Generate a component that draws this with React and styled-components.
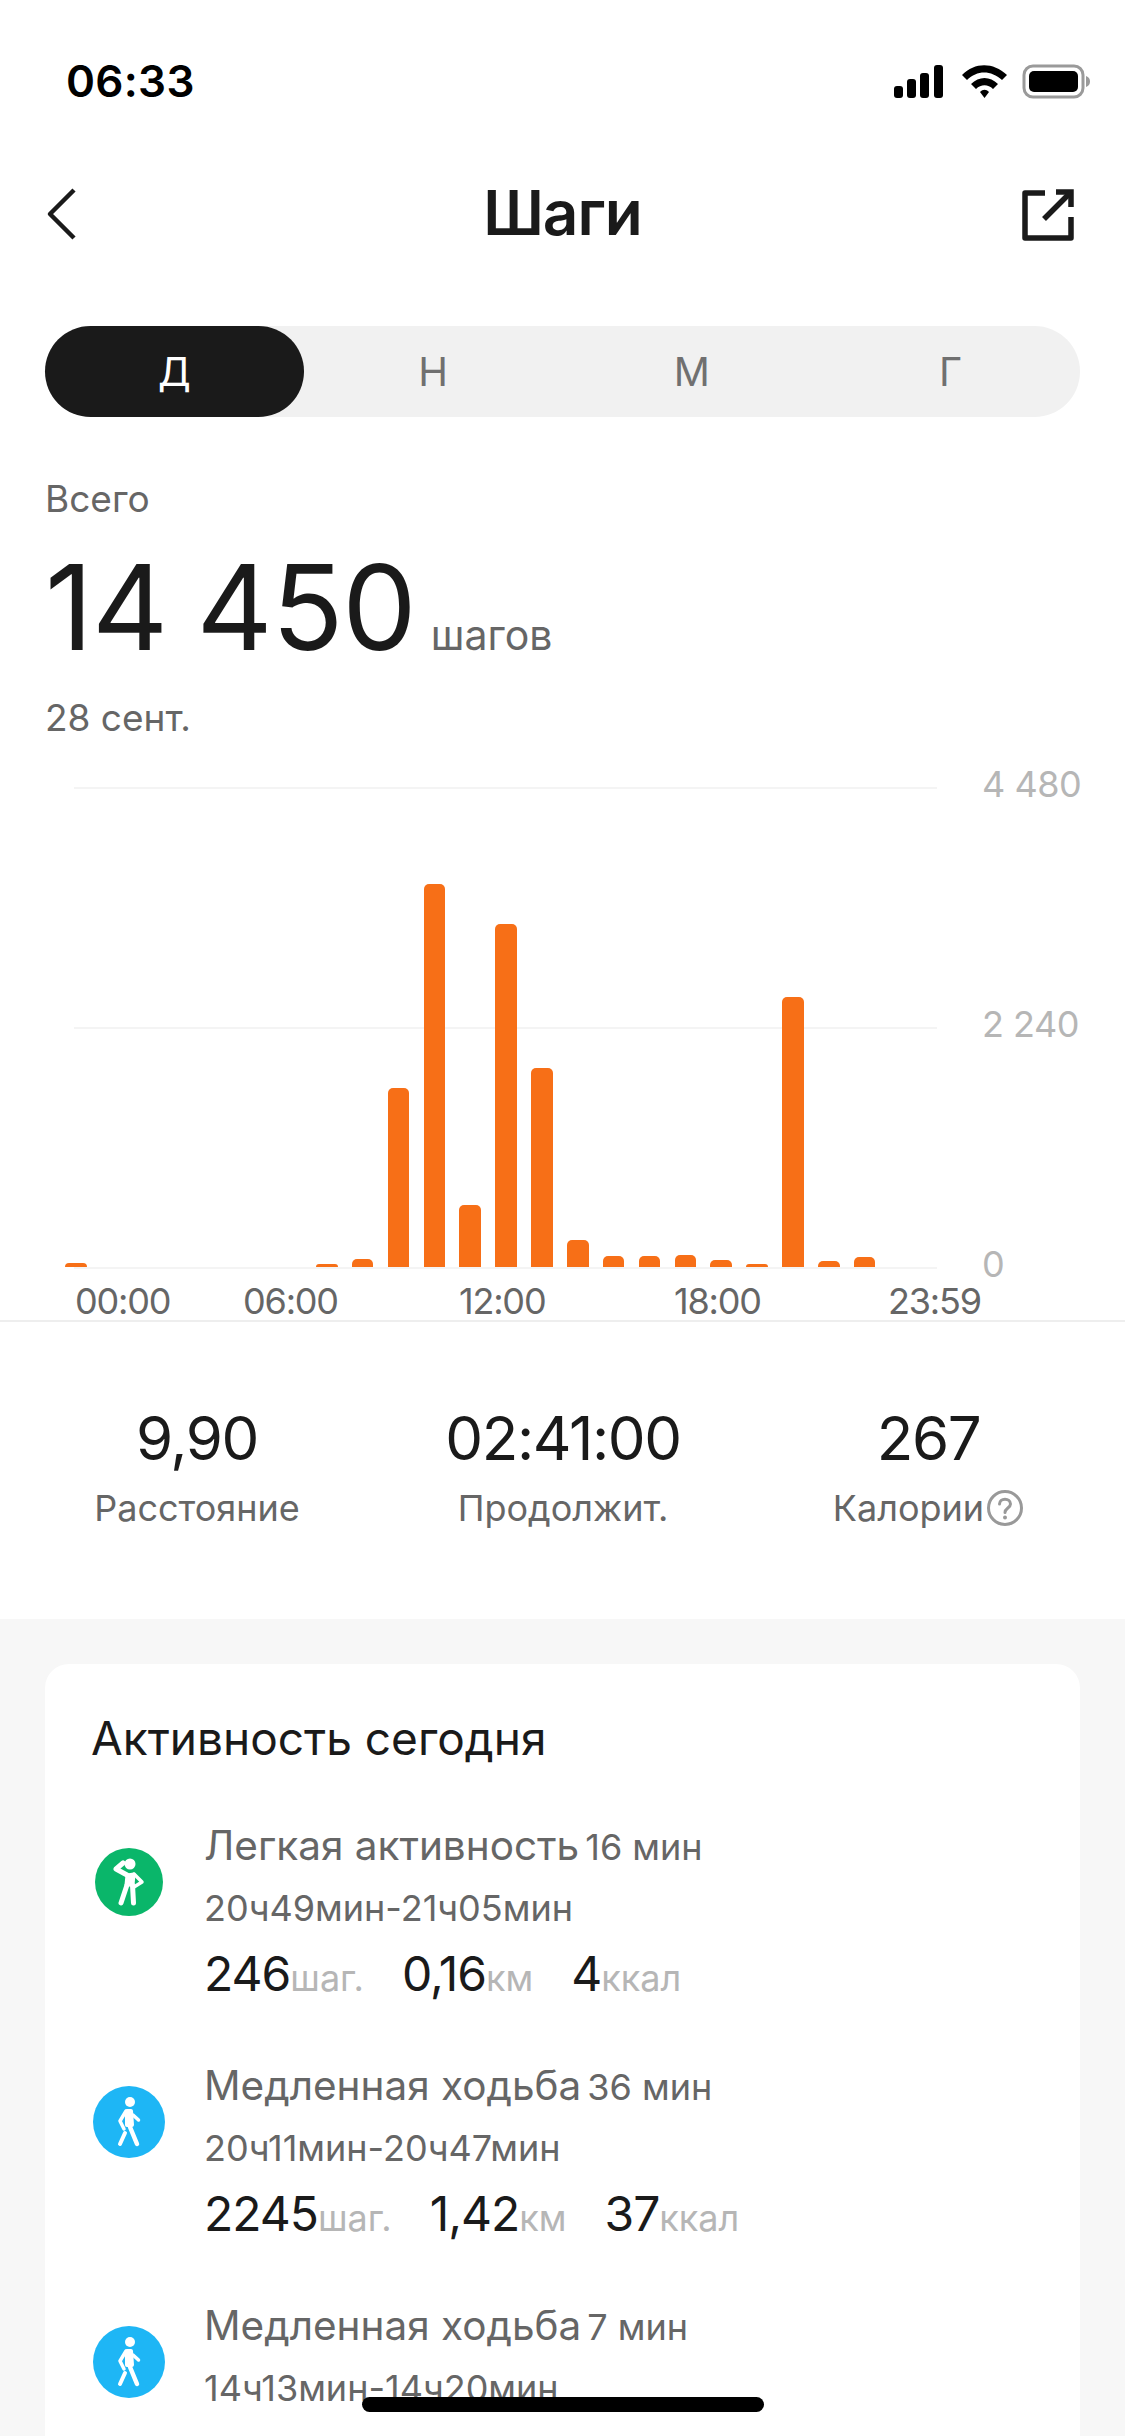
import React from 'react';
import styled, { createGlobalStyle } from 'styled-components';

const Global = createGlobalStyle`
  html, body { margin: 0; padding: 0; background: #fff; }
  #root { width: 1125px; height: 2436px; overflow: hidden; }
  * { box-sizing: border-box; }
`;
const Page = styled.div`
  position: relative; width: 1125px; height: 2436px; overflow: hidden; background: #fff;
  font-family: Inter, "Liberation Sans", sans-serif; color: #1a1a1a;
`;
const StatusBar = styled.div`
  height: 160px; padding: 58px 33px 0 66px; display: flex; justify-content: space-between; align-items: flex-start;
`;
const Clock = styled.div`
  font-size: 44px; line-height: 46px; font-weight: 600; color: #000; letter-spacing: 0.3px;
`;
const StatusIcons = styled.div`
  display: flex; margin-top: 6px;
`;
const NavBar = styled.div`
  height: 106px; padding: 0 44px; display: grid; grid-template-columns: 1fr auto 1fr; align-items: center;
`;
const NavStart = styled.div`
  display: flex; justify-content: flex-start; padding-top: 2px;
`;
const NavEnd = styled.div`
  display: flex; justify-content: flex-end; padding: 4px 6px 0 0;
`;
const Title = styled.div`
  font-size: 62px; font-weight: 600; line-height: 106px; letter-spacing: -1px;
`;
const Segments = styled.div`
  margin: 60px 45px 0; height: 91px; border-radius: 46px; background: #f1f1f1; display: grid; grid-template-columns: repeat(4, 1fr);
`;
const Segment = styled.div`
  display: flex; align-items: center; justify-content: center; font-size: 40px; border-radius: 46px;
  background: ${p => (p.$active ? '#1a1a1a' : 'transparent')};
  color: ${p => (p.$active ? '#fff' : '#707070')};
`;
const Summary = styled.div`
  padding: 60px 45px 0;
`;
const Caption = styled.div`
  font-size: 37px; line-height: 44px; color: #666;
`;
const TotalRow = styled.div`
  display: flex; align-items: baseline; gap: 15px; margin-top: 18px; height: 136px;
`;
const TotalValue = styled.span`
  font-size: 118px; line-height: 136px; letter-spacing: -1px; word-spacing: -3px; color: #1a1a1a;
`;
const TotalUnit = styled.span`
  font-size: 41px; color: #666;
`;
const DateCaption = styled(Caption)`
  margin-top: 21px;
`;
const Chart = styled.div`
  margin-top: 47px; display: grid; grid-template-columns: 872px auto; column-gap: 45px; padding-left: 65px; padding-right: 45px;
`;
const Plot = styled.div`
  display: grid; height: 482px;
`;
const Lines = styled.div`
  grid-area: 1 / 1; display: flex; flex-direction: column; justify-content: space-between; padding-left: 9px;
`;
const Line = styled.div`
  height: 2px; background: #f4f4f4;
`;
const Bars = styled.div`
  grid-area: 1 / 1; display: flex; align-items: flex-end; gap: 14.37px; padding-bottom: 2px;
`;
const Bar = styled.div`
  width: 21.5px; flex: none; background: #f76f17; border-radius: 5px 5px 0 0;
`;
const YAxis = styled.div`
  margin: -25px 0 -17px; display: flex; flex-direction: column; justify-content: space-between;
  font-size: 36px; line-height: 44px; color: #b6b6b6; white-space: nowrap; letter-spacing: -0.5px;
`;
const XAxis = styled.div`
  display: flex; padding-left: 75px; margin-top: 10px; height: 41px; font-size: 36px; line-height: 44px; color: #666; letter-spacing: -1.2px;
`;
const XLabel = styled.span`
  width: ${p => p.$w}px; flex: none; white-space: nowrap;
`;
const Divider = styled.div`
  height: 2px; background: #eee;
`;
const Stats = styled.div`
  height: 297px; display: grid; grid-template-columns: 364px 368px 1fr; padding: 80px 15px 0;
`;
const Stat = styled.div`
  display: flex; flex-direction: column; align-items: center;
`;
const StatValue = styled.div`
  font-size: 60px; line-height: 72px; color: #1a1a1a; letter-spacing: -1.4px;
`;
const StatLabel = styled.div`
  display: flex; align-items: center; gap: 2px; margin-top: 12px; font-size: 36px; line-height: 44px; color: #666;
`;
const Band = styled.div`
  background: #f7f7f7; height: 817px; padding: 45px 45px 0;
`;
const Card = styled.div`
  background: #fff; border-radius: 24px 24px 0 0; height: 772px; padding: 49px 46px 0; overflow: hidden;
`;
const CardTitle = styled.div`
  font-size: 46px; line-height: 50px; color: #1a1a1a;
`;
const Activity = styled.div`
  display: flex; height: 240px; align-items: flex-start;
`;
const ActivityList = styled.div`
  margin-top: 53px;
`;
const Badge = styled.div`
  flex: none; width: ${p => p.$size}px; height: ${p => p.$size}px; border-radius: 50%; background: ${p => p.$bg};
  margin: ${p => p.$top}px ${p => 113 - p.$size - p.$left}px 0 ${p => p.$left}px;
  display: flex; align-items: center; justify-content: center;
`;
const ActivityBody = styled.div`
  flex: 1; min-width: 0;
`;
const ActivityHead = styled.div`
  display: flex; align-items: baseline; gap: 6px; height: 60px; line-height: 60px;
`;
const ActivityName = styled.span`
  font-size: 40.5px; color: #666;
`;
const ActivityDuration = styled.span`
  font-size: 36px; color: #666;
`;
const ActivityTime = styled.div`
  font-size: 36px; line-height: 44px; color: #666; margin-top: 10px;
`;
const Metrics = styled.div`
  display: flex; gap: 38px; margin-top: 15px; align-items: baseline;
`;
const Metric = styled.div`
  display: flex; align-items: baseline;
`;
const MetricValue = styled.span`
  font-size: 48px; line-height: 58px; color: #1a1a1a; letter-spacing: -1px;
`;
const MetricUnit = styled.span`
  font-size: 36px; color: #b6b6b6;
`;
const HomeIndicator = styled.div`
  position: absolute; left: 362px; top: 2397px; width: 402px; height: 15px; border-radius: 8px; background: #000;
`;

const heights = [4,0,0,0,0,0,0,3,8,179,383,62,343,199,27,11,11,12,7,3,270,6,10,0];

const Back = () => (
  <svg width="34" height="54" viewBox="0 0 34 54" fill="none"><path d="M30 3 L6 27 L30 51" stroke="#1a1a1a" strokeWidth="4.5" strokeLinejoin="round" /></svg>
);
const Share = () => (
  <svg width="54" height="54" viewBox="0 0 54 54" fill="none" stroke="#1a1a1a" strokeWidth="5.500">
    <path d="M24 5 H4 V50 H50 V29" strokeLinejoin="round" />
    <path d="M35 4 H50 V19" />
    <path d="M50 4 L23 31" />
  </svg>
);
const StatusIcon = () => (
  <svg width="200" height="36" viewBox="0 0 200 36">
    <rect x="2" y="22" width="9" height="12" rx="3" />
    <rect x="15" y="15" width="9" height="19" rx="3" />
    <rect x="28" y="9" width="9" height="25" rx="3" />
    <rect x="42" y="1" width="9" height="33" rx="3" />
    <path d="M70 11 C83 -2 101 -2 115 11 L110 16 C99 6 85 6 75 16 Z" />
    <path d="M79 20 C87 12 98 12 106 20 L101 25 C96 20 89 20 84 25 Z" />
    <path d="M88 28 C91 25 94 25 97 28 L92.500 34 Z" />
    <rect x="132" y="2" width="59" height="31" rx="9" fill="none" stroke="#9a9a9a" strokeWidth="3" />
    <rect x="137" y="7" width="49" height="21" rx="5" />
    <path d="M194 12 C197 13 198 15 198 17.500 C198 20 197 22 194 23 Z" fill="#9a9a9a" />
  </svg>
);
const Help = () => (
  <svg width="38" height="38" viewBox="0 0 38 38" fill="none">
    <circle cx="19" cy="19" r="16.500" stroke="#999" strokeWidth="3" />
    <path d="M13.500 15 C13.500 8.500 24.500 8.500 24.500 15 C24.500 19 19 19 19 23.500" stroke="#999" strokeWidth="3" strokeLinecap="round" />
    <circle cx="19" cy="28.500" r="2" fill="#999" />
  </svg>
);
const Stretch = () => (
  <svg width="32" height="48" viewBox="0 0 32 48" fill="#fff" stroke="#fff" strokeLinecap="round" strokeLinejoin="round">
    <circle cx="17" cy="6" r="5.500" stroke="none" />
    <path d="M14 17 L3 11 L10 5" fill="none" strokeWidth="5" />
    <path d="M14 17 L21 16 L20 27 L13 27 Z" strokeWidth="3" />
    <path d="M21 16 L29 24 L21 29" fill="none" strokeWidth="3.500" />
    <path d="M14 27 L8 45" fill="none" strokeWidth="5" />
    <path d="M19.500 27 L20.500 45" fill="none" strokeWidth="5" />
  </svg>
);
const Walk = () => (
  <svg width="26" height="50" viewBox="0 0 26 50" fill="#fff" stroke="#fff" strokeLinecap="round" strokeLinejoin="round">
    <circle cx="14" cy="5" r="5" stroke="none" />
    <path d="M11 14 L15 14 L16 28 L11 28 Z" strokeWidth="4" />
    <path d="M10 14 L4 24 L8 32" fill="none" strokeWidth="3.500" />
    <path d="M17 18 L22.500 23" fill="none" strokeWidth="3.500" />
    <path d="M14 30 L21 47" fill="none" strokeWidth="4.500" />
    <path d="M9 36 L4 47" fill="none" strokeWidth="4" />
  </svg>
);

const activities = [
  { name: 'Легкая активность', dur: '16 мин', time: '20ч49мин-21ч05мин', icon: <Stretch />, bg: '#0ab66a', size: 68, top: 32, left: 4, m: ['246', '0,16', '4'] },
  { name: 'Медленная ходьба', dur: '36 мин', time: '20ч11мин-20ч47мин', icon: <Walk />, bg: '#1eb6f5', size: 72, top: 30, left: 2, m: ['2245', '1,42', '37'] },
  { name: 'Медленная ходьба', dur: '7 мин', time: '14ч13мин-14ч20мин', icon: <Walk />, bg: '#1eb6f5', size: 72, top: 30, left: 2, m: ['134', '0,07', '2'] },
];
const units = ['шаг.', 'км', 'ккал'];
const xLabels = [['00:00', 168], ['06:00', 216], ['12:00', 215], ['18:00', 214], ['23:59', 100]];

export default function App() {
  return (
    <Page>
      <Global />
      <StatusBar>
        <Clock>06:33</Clock>
        <StatusIcons><StatusIcon /></StatusIcons>
      </StatusBar>
      <NavBar>
        <NavStart><Back /></NavStart>
        <Title>Шаги</Title>
        <NavEnd><Share /></NavEnd>
      </NavBar>
      <Segments>
        <Segment $active>Д</Segment>
        <Segment>Н</Segment>
        <Segment>М</Segment>
        <Segment>Г</Segment>
      </Segments>
      <Summary>
        <Caption>Всего</Caption>
        <TotalRow>
          <TotalValue>14 450</TotalValue>
          <TotalUnit>шагов</TotalUnit>
        </TotalRow>
        <DateCaption>28 сент.</DateCaption>
      </Summary>
      <Chart>
        <Plot>
          <Lines><Line /><Line /><Line /></Lines>
          <Bars>{heights.map((h, i) => <Bar key={i} style={{ height: h }} />)}</Bars>
        </Plot>
        <YAxis><span>4 480</span><span>2 240</span><span>0</span></YAxis>
      </Chart>
      <XAxis>{xLabels.map(([t, w]) => <XLabel key={t} $w={w}>{t}</XLabel>)}</XAxis>
      <Divider />
      <Stats>
        <Stat><StatValue>9,90</StatValue><StatLabel>Расстояние</StatLabel></Stat>
        <Stat><StatValue>02:41:00</StatValue><StatLabel>Продолжит.</StatLabel></Stat>
        <Stat><StatValue>267</StatValue><StatLabel>Калории<Help /></StatLabel></Stat>
      </Stats>
      <Band>
        <Card>
          <CardTitle>Активность сегодня</CardTitle>
          <ActivityList>
            {activities.map((a, i) => (
              <Activity key={i}>
                <Badge $bg={a.bg} $size={a.size} $top={a.top} $left={a.left}>{a.icon}</Badge>
                <ActivityBody>
                  <ActivityHead><ActivityName>{a.name}</ActivityName><ActivityDuration>{a.dur}</ActivityDuration></ActivityHead>
                  <ActivityTime>{a.time}</ActivityTime>
                  <Metrics>
                    {a.m.map((v, j) => (
                      <Metric key={j}><MetricValue>{v}</MetricValue><MetricUnit>{units[j]}</MetricUnit></Metric>
                    ))}
                  </Metrics>
                </ActivityBody>
              </Activity>
            ))}
          </ActivityList>
        </Card>
      </Band>
      <HomeIndicator />
    </Page>
  );
}
